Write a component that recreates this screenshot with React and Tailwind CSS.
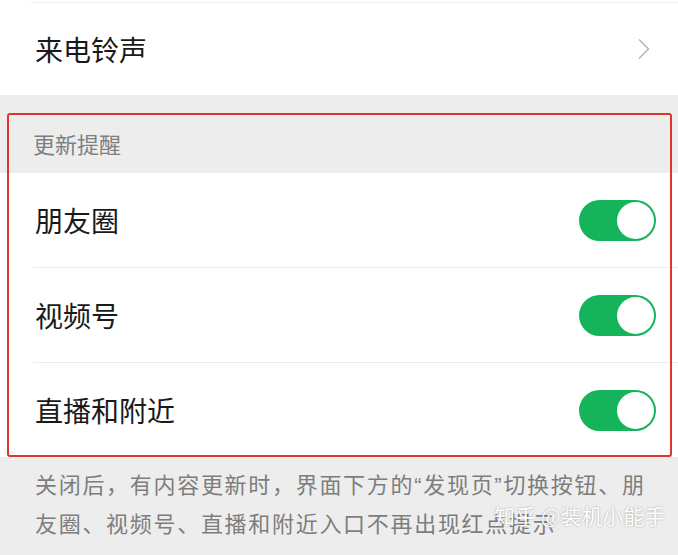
import { ChevronRight } from "lucide-react";

const font = { fontFamily: '"Noto Sans CJK SC", "Noto Sans", sans-serif' };
const latin = { fontFamily: '"Liberation Sans", sans-serif' };

const Toggle = () => (
  <div className="relative w-[77px] h-[41px] rounded-full bg-[#15b35a]">
    <div className="absolute right-[2px] top-[2px] w-[37px] h-[37px] rounded-full bg-white" />
  </div>
);

const rows = ["朋友圈", "视频号", "直播和附近"];

export default function App() {
  return (
    <div className="w-[678px] h-[555px] bg-[#ededed] overflow-hidden relative" style={font}>
      {/* ringtone row */}
      <div className="bg-white">
        <div className="ml-[30px] h-[3px] border-b border-[#f0f0f0]" />
        <div className="h-[92px] flex items-center justify-between pl-[35px] pr-[16px]">
          <span className="text-[28px] text-[#1a1a1a]">来电铃声</span>
          <ChevronRight className="w-[36px] h-[36px] text-[#b8b8b8]" strokeWidth={1.1} />
        </div>
      </div>

      <div className="h-[18px]" />

      {/* update reminders */}
      <div className="h-[60px] flex items-center pl-[33px]">
        <span className="text-[22px] text-[#7f7f7f]">更新提醒</span>
      </div>
      <div className="bg-white">
        {rows.map((label, i) => (
          <div key={label} className="pl-[33px]">
            {i > 0 && <div className="border-t border-[#ececec]" />}
            <div className="h-[94px] flex items-center justify-between pr-[22px]">
              <span className="text-[28px] text-[#1a1a1a] pl-[2px]">{label}</span>
              <Toggle />
            </div>
          </div>
        ))}
      </div>

      <p className="pl-[35px] pr-[4px] pt-[8px] text-[22px] leading-[36px] tracking-[1.7px] text-[#7d7d7d]">
        关闭后，有内容更新时，界面下方的<span style={latin}>“</span>发现页<span style={latin}>”</span>切换按钮、朋
        <br />
        友圈、视频号、直播和附近入口不再出现红点提示
      </p>

      {/* annotation frame */}
      <div className="absolute left-[7px] top-[113px] w-[665px] h-[344px] border-2 border-[#e0352f] rounded-[3px]" />

      {/* watermark */}
      <span
        className="absolute left-[494px] top-[500px] whitespace-nowrap text-[21px] text-white"
        style={{ textShadow: "0 0 2px rgba(0,0,0,0.35)" }}
      >
        知乎 @装机小能手
      </span>
    </div>
  );
}
